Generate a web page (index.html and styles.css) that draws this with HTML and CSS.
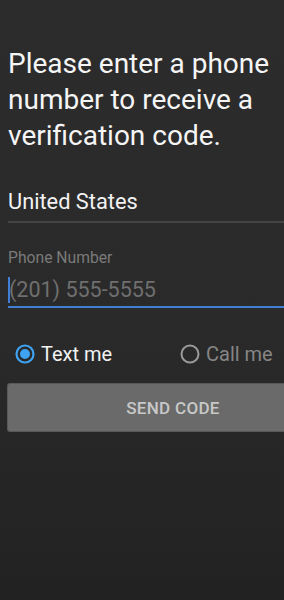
FILE: index.html
```html
<!DOCTYPE html>
<html lang="en">
<head>
    <meta charset="UTF-8">
    <meta name="viewport" content="width=device-width, initial-scale=1.0">
    <title>Phone Verification</title>
    <link rel="stylesheet" href="styles.css">
</head>
<body>

<div class="screen">
    <div class="form">
        <h1 class="prompt">Please enter a phone number to receive a verification code.</h1>

        <div class="country">United States</div>

        <label class="field-label" for="phone">Phone Number</label>
        <div class="phone-input" id="phone">
            <span class="caret"></span><span class="placeholder">(201) 555-5555</span>
        </div>

        <div class="radio-row">
            <div class="radio-option checked">
                <svg class="radio" width="20" height="20" viewBox="0 0 20 20">
                    <circle cx="10" cy="10" r="8.5" fill="none" stroke="#3ea3f2" stroke-width="2.2"/>
                    <circle cx="10" cy="10" r="5" fill="#3ea3f2"/>
                </svg>
                <span>Text me</span>
            </div>
            <div class="radio-option">
                <svg class="radio" width="20" height="20" viewBox="0 0 20 20">
                    <circle cx="10" cy="10" r="8.5" fill="none" stroke="#9a9a9a" stroke-width="2"/>
                </svg>
                <span>Call me</span>
            </div>
        </div>

        <button class="send">SEND CODE</button>
    </div>
</div>

</body>
</html>
```

FILE: styles.css
```css
html, body {
    margin: 0;
    padding: 0;
    overflow: hidden;
}
body {
    font-family: Roboto, "Liberation Sans", sans-serif;
    background: linear-gradient(#2c2c2c, #2a2a2a 55%, #222222);
    min-height: 600px;
    color: #f2f2f2;
}
.screen {
    padding: 46px 0 0 8px;
    width: 330px;
}
.form {
    width: 330px;
}
.prompt {
    margin: 0;
    font-size: 28px;
    line-height: 36px;
    font-weight: 400;
    color: #f5f5f5;
    width: 276px;
}
.country {
    margin-top: 36px;
    font-size: 21.8px;
    line-height: 24px;
    padding-bottom: 7px;
    border-bottom: 2px solid #444444;
}
.field-label {
    display: block;
    margin-top: 27px;
    font-size: 15.7px;
    line-height: 16px;
    color: #7a7a7a;
}
.phone-input {
    margin-top: 11px;
    font-size: 21.5px;
    line-height: 26px;
    padding-bottom: 3px;
    border-bottom: 2px solid #3f7fd6;
    display: flex;
    align-items: center;
}
.caret {
    display: inline-block;
    width: 2px;
    height: 26px;
    background: #3f7fd6;
    margin-right: -1px;
}
.placeholder {
    color: #6f6f6f;
}
.radio-row {
    display: grid;
    grid-template-columns: 1fr 1fr;
    margin-top: 34px;
}
.radio-option {
    display: flex;
    align-items: center;
    gap: 6px;
    padding-left: 7px;
    font-size: 20px;
    line-height: 24px;
    color: #858585;
}
.radio-option.checked {
    color: #f2f2f2;
}
.radio {
    flex: none;
}
.send {
    display: block;
    width: 100%;
    height: 47px;
    margin-top: 18px;
    border: none;
    border-radius: 2px;
    background: #6a6a6a;
    box-shadow: 0 0 0 1px #585858;
    color: #c8c8c8;
    font-family: Roboto, "Liberation Sans", sans-serif;
    font-size: 17px;
    font-weight: 500;
    letter-spacing: 0.3px;
}
```
